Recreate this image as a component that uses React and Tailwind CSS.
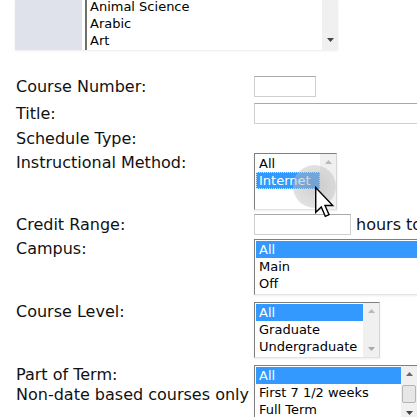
const font = { fontFamily: '"DejaVu Sans", Verdana, sans-serif' };

function Arrow({ dir }) {
  return (
    <div className="h-[16px] flex items-center justify-center">
      <svg width="7" height="4" viewBox="0 0 7 4">
        {dir === 'up' ? <path d="M0 4 L3.5 0 L7 4 Z" fill="#6a6a6a" /> : <path d="M0 0 L3.5 4 L7 0 Z" fill="#444" />}
      </svg>
    </div>
  );
}

function Scrollbar({ up = true, down = true, thumb = false, fade }) {
  return (
    <div className="w-[16px] shrink-0 bg-[#f0f0f0] flex flex-col justify-between">
      <div className={fade ? 'opacity-40' : ''}>{up ? <Arrow dir="up" /> : <div className="h-[16px]" />}</div>
      {thumb && <div className="mx-[1px] h-[18px] bg-[#e6e6e6] border border-[#b5b5b5] rounded-[2px]" />}
      <div className={fade ? 'opacity-40' : ''}>{down ? <Arrow dir="down" /> : <div className="h-[16px]" />}</div>
    </div>
  );
}

function ListBox({ width, height, items, selected, dotted, scroll }) {
  return (
    <div
      className="flex shrink-0 bg-white border border-t-[#7f7f7f] border-l-[#7f7f7f] border-r-[#d6d6d6] border-b-[#e2e2e2] shadow-[0_1px_2px_rgba(0,0,0,0.08)]"
      style={{ width, height }}
    >
      <div className="flex-1 pt-[1px] pl-[1px] text-[13px] leading-[17px] text-black overflow-hidden">
        {items.map((it, i) => (
          <div
            key={it}
            className={
              i === selected
                ? `px-[3px] bg-[#3399ff] text-white ${dotted ? 'outline outline-1 outline-dotted outline-[#cfe6ff] -outline-offset-1' : ''}`
                : 'px-[3px]'
            }
          >
            {it}
          </div>
        ))}
      </div>
      {scroll}
    </div>
  );
}

function TextBox({ width }) {
  return <div className="h-[21px] bg-white border border-[#cfcfcf] border-t-[#a9a9a9] shrink-0" style={{ width }} />;
}

function Row({ label, mt, children, lh = 'leading-[21px]' }) {
  return (
    <div className="flex items-start" style={{ marginTop: mt }}>
      <div className={`w-[254px] shrink-0 pl-[16px] text-[16px] text-[#111] ${lh}`}>{label}</div>
      {children}
    </div>
  );
}

export default function App() {
  return (
    <div className="relative w-[417px] h-[417px] overflow-hidden bg-white" style={font}>
      <div className="flex ml-[15px] h-[50px] w-[323px] shadow-[0_1px_2px_rgba(0,0,0,0.08)]">
        <div className="w-[67px] bg-[#dfe2ea]" />
        <div className="w-[3px] bg-white" />
        <div className="flex-1 flex bg-white border-l-2 border-[#6f6f6f]">
          <div className="flex-1 pl-[3px] mt-[-2px] text-[13px] leading-[17px] text-black">
            <div>Animal Science</div>
            <div>Arabic</div>
            <div>Art</div>
          </div>
          <div className="w-[16px] bg-[#f0f0f0] flex flex-col justify-end pb-[2px]">
            <Arrow dir="down" />
          </div>
        </div>
      </div>

      <Row label="Course Number:" mt={26}>
        <TextBox width={62} />
      </Row>
      <Row label="Title:" mt={6}>
        <TextBox width={180} />
      </Row>
      <Row label="Schedule Type:" mt={4}>
        <div className="h-[21px]" />
      </Row>
      <Row label="Instructional Method:" mt={4} lh="leading-[20px]">
        <ListBox
          width={83}
          height={57}
          items={['All', 'Internet']}
          selected={1}
          dotted
          scroll={<Scrollbar down={false} fade />}
        />
      </Row>
      <Row label="Credit Range:" mt={4}>
        <TextBox width={97} />
        <span className="ml-[5px] text-[16px] leading-[21px] text-[#111] whitespace-nowrap">hours to</span>
      </Row>
      <Row label="Campus:" mt={4} lh="leading-[20px]">
        <ListBox
          width={200}
          height={56}
          items={['All', 'Main', 'Off']}
          selected={0}
          scroll={<Scrollbar />}
        />
      </Row>
      <Row label="Course Level:" mt={7} lh="leading-[20px]">
        <ListBox
          width={126}
          height={56}
          items={['All', 'Graduate', 'Undergraduate']}
          selected={0}
          scroll={<Scrollbar fade />}
        />
      </Row>
      <div className="flex items-start mt-[7px]">
        <div className="w-[254px] shrink-0 pl-[16px] text-[16px] leading-[20px] text-[#111] whitespace-nowrap">
          <div>Part of Term:</div>
          <div>Non-date based courses only</div>
        </div>
        <ListBox
          width={164}
          height={57}
          items={['All', 'First 7 1/2 weeks', 'Full Term']}
          selected={0}
          scroll={<Scrollbar thumb />}
        />
      </div>

      <div className="absolute left-[293px] top-[165px] w-[43px] h-[43px] rounded-full bg-[radial-gradient(circle,rgba(170,170,170,0.55)_0%,rgba(190,190,190,0.45)_70%,rgba(210,210,210,0.2)_100%)] pointer-events-none" />
      <svg className="absolute left-[313px] top-[186px] pointer-events-none" width="24" height="34" viewBox="0 0 14 22">
        <path d="M1 1 L1 17 L4.6 13.6 L7.2 19.6 L9.6 18.6 L7 12.6 L12 12.6 Z" fill="#fff" stroke="#000" strokeWidth="0.9" strokeLinejoin="miter" />
      </svg>
    </div>
  );
}
